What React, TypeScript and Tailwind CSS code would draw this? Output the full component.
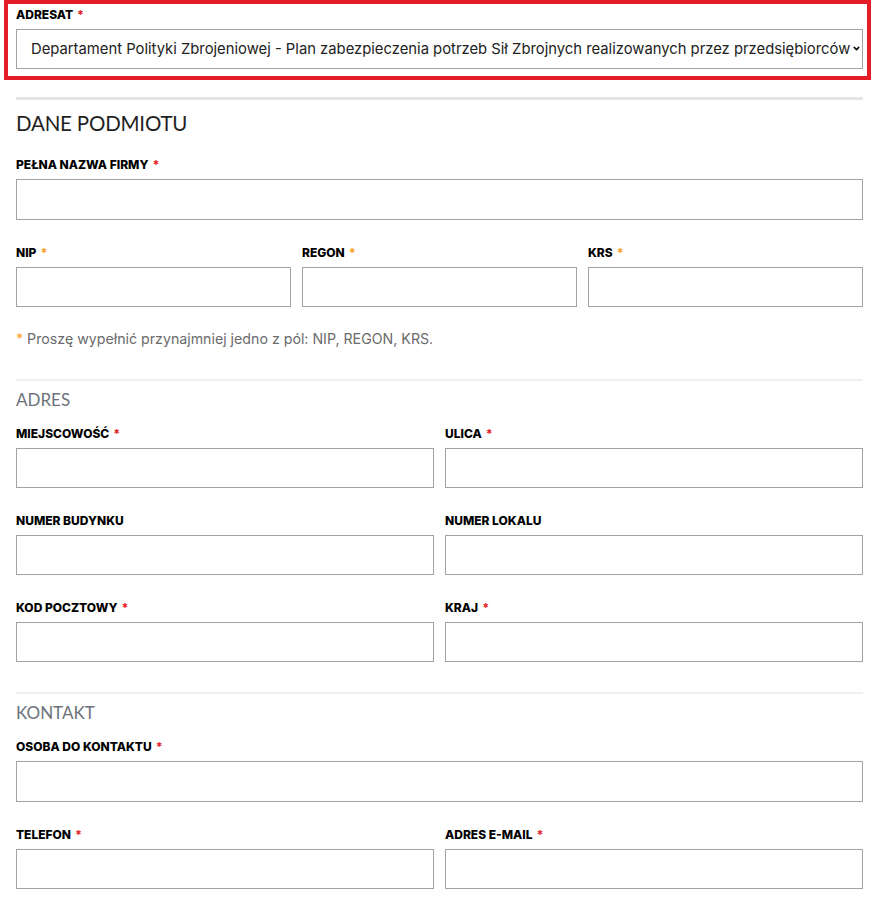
import { ChevronDown } from "lucide-react";

const SANS = "font-['Inter','Noto_Sans',sans-serif]";

function Label({ text, mark = "red" }: { text: string; mark?: "red" | "orange" | "none" }) {
  return (
    <label className={`block h-4 text-[12px] font-extrabold uppercase leading-4 text-black ${SANS}`}>
      {text}
      {mark !== "none" && (
        <span className={mark === "red" ? "ml-1 text-[#e3262b]" : "ml-1 text-[#f5a025]"}>*</span>
      )}
    </label>
  );
}

function Field({ label, mark = "red", tall = false }: { label: string; mark?: "red" | "orange" | "none"; tall?: boolean }) {
  return (
    <div className="flex flex-col gap-[6px]">
      <Label text={label} mark={mark} />
      <input
        type="text"
        className={`${tall ? "h-[41px]" : "h-10"} w-full border border-[#a2a2a2] bg-white px-3 text-sm outline-none`}
      />
    </div>
  );
}

export default function App() {
  return (
    <div className={`w-[877px] bg-white pb-[11px] ${SANS}`}>
      {/* adresat - highlighted */}
      <div className="ml-1 mr-[6px] border-4 border-[#e41e26] pb-[7px] pl-2 pr-1 pt-[3px]">
        <Label text="Adresat" />
        <div className="relative mt-[6px]">
          <select
            defaultValue="dpz"
            className="h-10 w-full appearance-none border border-[#a2a2a2] bg-white pl-[14px] pr-2 text-[14.8px] text-[#222] outline-none"
          >
            <option value="dpz">
              Departament Polityki Zbrojeniowej - Plan zabezpieczenia potrzeb Sił Zbrojnych realizowanych przez przedsiębiorców
            </option>
          </select>
          <ChevronDown className="pointer-events-none absolute right-[2px] top-[15px] h-[9px] w-[9px] text-black" strokeWidth={4} />
        </div>
      </div>

      <div className="pl-4 pr-[14px]">
        <div className="mt-[17px] h-[3px] bg-[#e6e6ea]" />
        <h2 className="mt-[9px] text-[20.5px] leading-7 tracking-[-0.2px] text-[#1f1f1f] font-['Lato',sans-serif]">DANE PODMIOTU</h2>

        <div className="mt-5">
          <Field label="Pełna nazwa firmy" tall />
        </div>

        <div className="mt-[25px] grid grid-cols-3 gap-[11px]">
          <Field label="NIP" mark="orange" />
          <Field label="REGON" mark="orange" />
          <Field label="KRS" mark="orange" />
        </div>

        <p className="mt-[22px] text-[14.2px] leading-5 text-[#6b6b6b]">
          <span className="text-[#f5a025]">*</span> Proszę wypełnić przynajmniej jedno z pól: NIP, REGON, KRS.
        </p>

        <div className="mt-[30px] h-[2px] bg-[#efefef]" />
        <h3 className="mt-[7px] text-[17px] leading-6 text-[#6c727c] font-['Lato',sans-serif]">ADRES</h3>

        <div className="mt-[14px] grid grid-cols-2 gap-x-[11px] gap-y-[25px]">
          <Field label="Miejscowość" />
          <Field label="Ulica" />
          <Field label="Numer budynku" mark="none" />
          <Field label="Numer lokalu" mark="none" />
          <Field label="Kod pocztowy" />
          <Field label="Kraj" />
        </div>

        <div className="mt-[30px] h-[2px] bg-[#efefef]" />
        <h3 className="mt-[7px] text-[17px] leading-6 text-[#6c727c] font-['Lato',sans-serif]">KONTAKT</h3>

        <div className="mt-[14px]">
          <Field label="Osoba do kontaktu" tall />
        </div>

        <div className="mt-[25px] grid grid-cols-2 gap-x-[11px]">
          <Field label="Telefon" />
          <Field label="Adres e-mail" />
        </div>
      </div>
    </div>
  );
}
